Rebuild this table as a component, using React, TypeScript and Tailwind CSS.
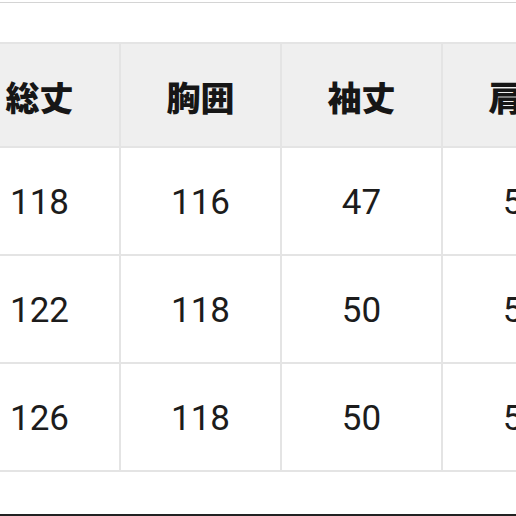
import React from "react";

const headers = ["総丈", "胸囲", "袖丈", "肩幅"];
const rows = [
  ["118", "116", "47", "50"],
  ["122", "118", "50", "52"],
  ["126", "118", "50", "54"],
];

export default function App() {
  return (
    <div className="w-[516px] h-[516px] bg-white overflow-hidden flex flex-col">
      <div className="h-[2px] shrink-0" />
      <div className="h-px shrink-0 bg-[#d4d4d4]" />
      <div className="h-[39px] shrink-0" />
      <div className="ml-[-40px] w-[644px] shrink-0 border-t-2 border-[#e4e4e4]">
        <div className="flex h-[104px] bg-[#efefef]">
          {headers.map((h) => (
            <div
              key={h}
              className="w-[161px] shrink-0 h-full border-r-2 border-b-2 border-[#e4e4e4] flex items-center justify-center pt-[3px] text-[34px] font-black text-[#161616] [font-family:'Noto_Sans_CJK_JP',sans-serif]"
            >
              {h}
            </div>
          ))}
        </div>
        {rows.map((r, i) => (
          <div key={i} className="flex h-[108px] bg-white">
            {r.map((c, j) => (
              <div
                key={j}
                className="w-[161px] shrink-0 h-full border-r-2 border-b-2 border-[#e4e4e4] flex items-center justify-center pt-[4px] text-[35px] text-[#1c1c1c] [font-family:Roboto,sans-serif]"
              >
                {c}
              </div>
            ))}
          </div>
        ))}
      </div>
      <div className="flex-1" />
      <div className="h-[2px] shrink-0 bg-[#222]" />
    </div>
  );
}
